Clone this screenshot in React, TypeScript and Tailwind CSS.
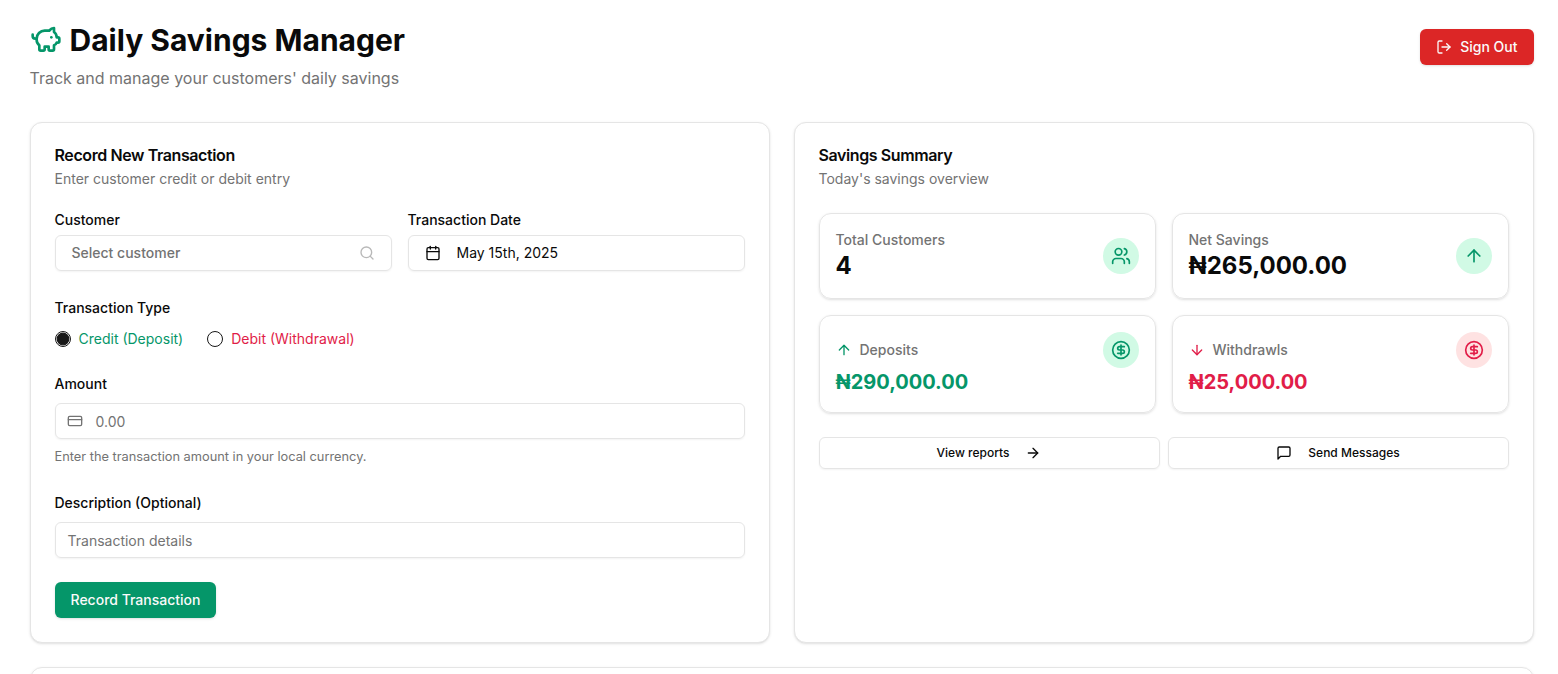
import React from 'react';
import {
  ArrowDown,
  ArrowRight,
  ArrowUp,
  Calendar,
  Circle,
  CircleDollarSign,
  CreditCard,
  LogOut,
  Search,
  Users,
} from 'lucide-react';

function Glyph({ className, children }: { className: string; children: React.ReactNode }) {
  return (
    <svg
      viewBox="0 0 24 24"
      fill="none"
      stroke="currentColor"
      strokeWidth="2"
      strokeLinecap="round"
      strokeLinejoin="round"
      className={className}
    >
      {children}
    </svg>
  );
}

function Card({ title, description, children }: { title: string; description: string; children: React.ReactNode }) {
  return (
    <section className="h-[521px] rounded-xl border border-[#e5e5e5] bg-white p-6 shadow">
      <h2 className="text-base leading-none font-semibold tracking-tight">{title}</h2>
      <p className="mt-1.5 text-sm text-[#737373]">{description}</p>
      <div className="mt-6">{children}</div>
    </section>
  );
}

function Label({ children }: { children: React.ReactNode }) {
  return <label className="block text-sm leading-none font-medium">{children}</label>;
}

function Badge({ tone, children }: { tone: 'green' | 'red'; children: React.ReactNode }) {
  const color = tone === 'green' ? 'bg-[#d1fae5] text-[#059669]' : 'bg-[#fee2e2] text-[#e11d48]';
  return <div className={`flex size-9 shrink-0 items-center justify-center rounded-full ${color}`}>{children}</div>;
}

function Stat({ label, value, icon }: { label: string; value: string; icon: React.ReactNode }) {
  return (
    <div className="flex items-center justify-between rounded-xl border border-[#e5e5e5] p-4 shadow">
      <div>
        <p className="text-sm font-medium text-[#737373]">{label}</p>
        <p className="text-2xl font-bold">{value}</p>
      </div>
      <Badge tone="green">{icon}</Badge>
    </div>
  );
}

function Flow({ label, value, tone }: { label: string; value: string; tone: 'green' | 'red' }) {
  const color = tone === 'green' ? 'text-[#059669]' : 'text-[#e11d48]';
  const Arrow = tone === 'green' ? ArrowUp : ArrowDown;
  return (
    <div className="rounded-xl border border-[#e5e5e5] p-4 shadow">
      <div className="flex items-center justify-between">
        <div className="flex items-center gap-2">
          <Arrow className={`size-4 ${color}`} />
          <span className="text-sm font-medium text-[#737373]">{label}</span>
        </div>
        <Badge tone={tone}>
          <CircleDollarSign className="size-5" />
        </Badge>
      </div>
      <p className={`text-xl font-bold ${color}`}>{value}</p>
    </div>
  );
}

export default function App() {
  return (
    <div className="h-[674px] overflow-hidden bg-white pt-[22px] pr-[24.5px] pl-[29.5px] font-['Inter',sans-serif] text-[#0a0a0a]">
      <header className="flex items-start justify-between">
        <div>
          <h1 className="flex items-center gap-2 text-3xl font-bold">
            <Glyph className="size-8 text-[#059669]">
              <path d="M11 17h3v2a1 1 0 0 0 1 1h2a1 1 0 0 0 1-1v-3a3.16 3.16 0 0 0 2-2h1a1 1 0 0 0 1-1v-2a1 1 0 0 0-1-1h-1a5 5 0 0 0-2-4V3a4 4 0 0 0-3.2 1.6l-.3.4H11a6 6 0 0 0-6 6v1a5 5 0 0 0 2 4v3a1 1 0 0 0 1 1h2a1 1 0 0 0 1-1z" />
              <path d="M16 10h.01" />
              <path d="M2 8v1a2 2 0 0 0 2 2h1" />
            </Glyph>
            Daily Savings Manager
          </h1>
          <p className="mt-2 text-base text-[#737373]">Track and manage your customers' daily savings</p>
        </div>
        <button className="mt-[7px] flex h-9 items-center gap-2 rounded-md bg-[#dc2626] px-4 text-sm font-medium text-[#fafafa] shadow-sm">
          <LogOut className="size-4" />
          Sign Out
        </button>
      </header>

      <main className="mt-8 grid grid-cols-2 gap-6">
        <Card title="Record New Transaction" description="Enter customer credit or debit entry">
          <div className="grid grid-cols-2 gap-4">
            <div>
              <Label>Customer</Label>
              <button className="mt-2 flex h-9 w-full items-center justify-between rounded-md border border-[#e5e5e5] px-4 text-sm font-medium text-[#737373] shadow-xs">
                Select customer
                <Search className="size-4 opacity-50" />
              </button>
            </div>
            <div>
              <Label>Transaction Date</Label>
              <button className="mt-2 flex h-9 w-full items-center gap-4 rounded-md border border-[#e5e5e5] px-4 text-sm shadow-xs">
                <Calendar className="size-4" />
                May 15th, 2025
              </button>
            </div>
          </div>

          <div className="mt-[30px]">
            <Label>Transaction Type</Label>
            <div className="mt-4 flex gap-6 text-sm leading-none">
              <div className="flex items-center gap-2 text-[#059669]">
                <span className="flex size-4 items-center justify-center rounded-full border border-[#171717]">
                  <Circle className="size-3.5 shrink-0 fill-[#171717] text-[#171717]" />
                </span>
                Credit (Deposit)
              </div>
              <div className="flex items-center gap-2 text-[#e11d48]">
                <span className="size-4 rounded-full border border-[#171717]" />
                Debit (Withdrawal)
              </div>
            </div>
          </div>

          <div className="mt-[30px]">
            <Label>Amount</Label>
            <div className="mt-3 flex h-9 items-center gap-[13px] rounded-md border border-[#e5e5e5] pr-3 pl-[11px] text-sm text-[#737373] shadow-xs">
              <CreditCard className="size-4" />
              <span className="pt-0.5">0.00</span>
            </div>
            <p className="mt-2 text-[12.8px] leading-5 text-[#737373]">Enter the transaction amount in your local currency.</p>
          </div>

          <div className="mt-[29px]">
            <Label>Description (Optional)</Label>
            <div className="mt-3 flex h-9 items-center rounded-md border border-[#e5e5e5] px-3 text-sm text-[#737373] shadow-xs">
              <span className="pt-0.5">Transaction details</span>
            </div>
          </div>

          <button className="mt-6 flex h-9 w-[161px] items-center rounded-md bg-[#059669] pl-4 text-sm font-medium whitespace-nowrap text-[#fafafa] shadow">
            Record Transaction
          </button>
        </Card>

        <Card title="Savings Summary" description="Today's savings overview">
          <div className="grid grid-cols-2 gap-4">
            <Stat label="Total Customers" value="4" icon={<Users className="size-5" />} />
            <Stat label="Net Savings" value="₦265,000.00" icon={<ArrowUp className="size-5" />} />
            <Flow label="Deposits" value="₦290,000.00" tone="green" />
            <Flow label="Withdrawls" value="₦25,000.00" tone="red" />
          </div>
          <div className="mt-6 grid grid-cols-2 gap-2">
            <button className="flex h-8 items-center justify-center gap-4 rounded-md border border-[#e5e5e5] text-xs font-medium shadow-xs">
              View reports
              <ArrowRight className="size-4" />
            </button>
            <button className="flex h-8 items-center justify-center gap-4 rounded-md border border-[#e5e5e5] text-xs font-medium shadow-xs">
              <Glyph className="size-4">
                <path d="M21 15a2 2 0 0 1-2 2H7l-4 4V5a2 2 0 0 1 2-2h14a2 2 0 0 1 2 2z" />
              </Glyph>
              Send Messages
            </button>
          </div>
        </Card>
      </main>

      <section className="mt-6 h-24 rounded-xl border border-[#e5e5e5] shadow" />
    </div>
  );
}
